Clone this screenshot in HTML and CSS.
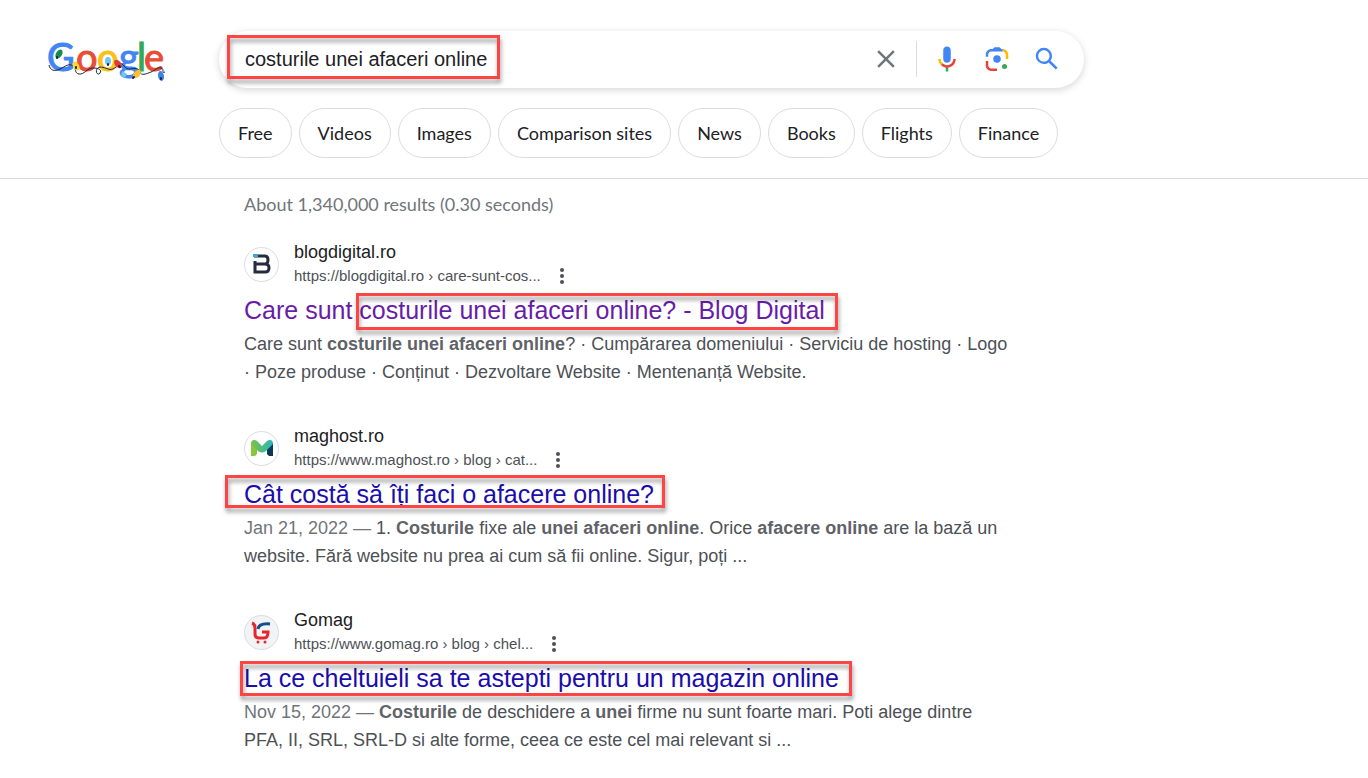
FILE: index.html
```html
<!DOCTYPE html>
<html lang="en">
<head>
    <meta charset="UTF-8">
    <meta name="viewport" content="width=device-width, initial-scale=1.0">
    <title>costurile unei afaceri online - Google Search</title>
    <link rel="stylesheet" href="styles.css">
</head>
<body>
    <header class="header">
        <div class="top">
            <a class="logo" href="#" aria-label="Google">
                <svg width="126" height="57" viewBox="0 0 126 57">
                    <g class="logo-text">
                        <text x="1" y="40" fill="#4285f4" stroke="#4285f4">G</text>
                        <text x="30" y="40" fill="#ea4c35" stroke="#ea4c35">o</text>
                        <text x="51" y="40" fill="#fbc116" stroke="#fbc116">o</text>
                        <text x="73" y="40" fill="#4285f4" stroke="#4285f4">g</text>
                        <text x="91" y="40" fill="#34a853" stroke="#34a853">l</text>
                        <text x="98" y="40" fill="#ea4c35" stroke="#ea4c35">e</text>
                    </g>
                    <!-- string of lights -->
                    <path d="M3 34c1 5 5 7 11 4s9-6 13-3 1 7 6 8 8-6 14-6 9 2 7 5-5-1-3-4 6-2 11 0 9-3 12-5 5 6 10 5 9-1 10 3 6 2 11 0 6-5 10-4 0 6 4 4" fill="none" stroke="#18283a" stroke-width="1"/>
                    <path d="M76 40l5 3-2 4-4-2z" fill="#6cc8ed"/>
                    <ellipse cx="13" cy="23" rx="3" ry="5" fill="#178a4c" transform="rotate(30 13 23)"/>
                    <ellipse cx="30" cy="35" rx="3" ry="5" fill="#fdd835" transform="rotate(-30 30 35)"/>
                    <ellipse cx="62" cy="30" rx="3" ry="4" fill="#6cc8ed"/>
                    <ellipse cx="72" cy="33" rx="3" ry="5" fill="#e23a3a" transform="rotate(-40 72 33)"/>
                    <ellipse cx="91" cy="43" rx="3" ry="5" fill="#fbc02d" transform="rotate(40 91 43)"/>
                    <ellipse cx="115" cy="45" rx="3" ry="5" fill="#3f83e8" transform="rotate(-10 115 45)"/>
                    <path d="M11 26v1M30 36v1M62 33v1M73 35l1 1M88 46l-1 1M115 47v1" stroke="#18283a" stroke-width="2" stroke-linecap="round"/>
                </svg>
            </a>
            <form class="search" action="#">
                <div class="query">
                    <input type="text" name="q" aria-label="Search" value="costurile unei afaceri online">
                    <span class="mark mark-query"></span>
                </div>
                <button class="clear" type="reset" aria-label="Clear">
                    <svg width="30" height="30" viewBox="0 0 24 24"><path d="M19 6.41L17.59 5 12 10.59 6.41 5 5 6.41 10.59 12 5 17.59 6.41 19 12 13.41 17.59 19 19 17.59 13.41 12z" fill="#70757a"/></svg>
                </button>
                <button class="tool" type="button" aria-label="Search by voice">
                    <svg width="30" height="30" viewBox="0 0 24 24">
                        <path d="M12 15c1.66 0 3-1.31 3-2.97V5c0-1.66-1.34-3-3-3S9 3.340 9 5v7.030c0 1.660 1.340 2.970 3 2.970z" fill="#4285f4"/>
                        <path d="M11 18.080h2V22h-2z" fill="#34a853"/>
                        <path d="M7.050 16.870C5.780 15.590 5 13.850 5 12h2c0 1.380.560 2.560 1.470 3.450l-1.420 1.420z" fill="#fbbc04"/>
                        <path d="M12 16.930c-1.380 0-2.610-.560-3.520-1.470l-1.420 1.410C8.320 18.150 10.050 19 12 19c3.870 0 7-3.060 7-7h-2c0 2.770-2.240 4.930-5 4.930z" fill="#ea4335"/>
                    </svg>
                </button>
                <button class="tool" type="button" aria-label="Search by image">
                    <svg width="30" height="30" viewBox="0 0 192 192">
                        <circle cx="144" cy="144" r="16" fill="#34a853"/>
                        <circle cx="96" cy="96" r="24" fill="#4285f4"/>
                        <path d="M24 109.500V136c0 19.900 16.100 36 36 36h36v-16H60c-11 0-20-9-20-20v-26.500z" fill="#ea4335"/>
                        <path d="M168 96V68c0-19.900-16.100-36-36-36v16c11 0 20 9 20 20v28z" fill="#fbbc04"/>
                        <path d="M112 20H80L68 32h-8c-19.900 0-36 16.100-36 36v14h16V68c0-11 9-20 20-20h72V32h-8z" fill="#4285f4"/>
                    </svg>
                </button>
                <button class="tool" type="submit" aria-label="Google Search">
                    <svg width="30" height="30" viewBox="0 0 24 24"><path d="M20.490 19l-5.730-5.730C15.530 12.200 16 10.910 16 9.500A6.500 6.500 0 1 0 9.500 16c1.410 0 2.700-.470 3.770-1.240L19 20.490 20.490 19zM5 9.500C5 7.010 7.010 5 9.500 5S14 7.010 14 9.500 11.990 14 9.500 14 5 11.990 5 9.500z" fill="#4285f4"/></svg>
                </button>
            </form>
        </div>
        <nav class="chips">
            <a href="#">Free</a>
            <a href="#">Videos</a>
            <a href="#">Images</a>
            <a href="#">Comparison sites</a>
            <a href="#">News</a>
            <a href="#">Books</a>
            <a href="#">Flights</a>
            <a href="#">Finance</a>
        </nav>
    </header>

    <main class="results">
        <p class="stats">About 1,340,000 results (0.30 seconds)</p>

        <article class="result">
            <div class="source">
                <span class="favicon">
                    <svg width="24" height="24" viewBox="0 0 24 24">
                        <path d="M4 4h11q3 0 3 4t-3 4H5M5 9v11h10q4 0 4-4t-4-4" fill="none" stroke="#272b3c" stroke-width="3"/>
                        <path d="M3 2h5v3H3z" fill="#38a3dc"/>
                    </svg>
                </span>
                <div>
                    <div class="site">blogdigital.ro</div>
                    <div class="url">
                        <cite>https://blogdigital.ro › care-sunt-cos...</cite>
                        <button type="button" aria-label="About this result">
                            <svg width="6" height="18" viewBox="0 0 6 18" fill="#4d5156"><circle cx="3" cy="3" r="2"/><circle cx="3" cy="9" r="2"/><circle cx="3" cy="15" r="2"/></svg>
                        </button>
                    </div>
                </div>
            </div>
            <h3><a class="visited" href="#">Care sunt <span class="marked">costurile unei afaceri online? - Blog Digital<span class="mark mark-first"></span></span></a></h3>
            <p>Care sunt <b>costurile unei afaceri online</b>? · Cumpărarea domeniului · Serviciu de hosting · Logo · Poze produse · Conținut · Dezvoltare Website · Mentenanță Website.</p>
        </article>

        <article class="result">
            <div class="source">
                <span class="favicon">
                    <svg width="24" height="24" viewBox="0 0 24 24">
                        <defs>
                            <linearGradient id="ribbon"><stop offset="0" stop-color="#7dc243"/><stop offset="1" stop-color="#26b6bd"/></linearGradient>
                        </defs>
                        <path d="M1 7l6 5v6l-2 2H1z" fill="#8bc53f"/>
                        <path d="M23 7l-6 5v6l2 2h4z" fill="#0f3557"/>
                        <path d="M1 8q0-4 3-4 2 0 3 1l5 5 5-5q1-1 3-1 3 0 3 4l-7 7q-4 3-8 0z" fill="url(#ribbon)"/>
                    </svg>
                </span>
                <div>
                    <div class="site">maghost.ro</div>
                    <div class="url">
                        <cite>https://www.maghost.ro › blog › cat...</cite>
                        <button type="button" aria-label="About this result">
                            <svg width="6" height="18" viewBox="0 0 6 18" fill="#4d5156"><circle cx="3" cy="3" r="2"/><circle cx="3" cy="9" r="2"/><circle cx="3" cy="15" r="2"/></svg>
                        </button>
                    </div>
                </div>
            </div>
            <h3><a class="marked" href="#">Cât costă să îți faci o afacere online?<span class="mark mark-second"></span></a></h3>
            <p><span class="date">Jan 21, 2022 — </span>1. <b>Costurile</b> fixe ale <b>unei afaceri online</b>. Orice <b>afacere online</b> are la bază un website. Fără website nu prea ai cum să fii online. Sigur, poți ...</p>
        </article>

        <article class="result">
            <div class="source">
                <span class="favicon tinted">
                    <svg width="24" height="24" viewBox="0 0 24 24" fill="none" stroke-width="3">
                        <path d="M8 9q1-6 12-5" stroke="#194b8f"/>
                        <path d="M2 3q3 1 3 5v6q0 4 4 4h5q4 0 4-6h-6" stroke="#e5252a"/>
                        <circle cx="8" cy="22" r="1.500" fill="#e5252a"/>
                        <circle cx="15" cy="22" r="1.500" fill="#e5252a"/>
                    </svg>
                </span>
                <div>
                    <div class="site">Gomag</div>
                    <div class="url">
                        <cite>https://www.gomag.ro › blog › chel...</cite>
                        <button type="button" aria-label="About this result">
                            <svg width="6" height="18" viewBox="0 0 6 18" fill="#4d5156"><circle cx="3" cy="3" r="2"/><circle cx="3" cy="9" r="2"/><circle cx="3" cy="15" r="2"/></svg>
                        </button>
                    </div>
                </div>
            </div>
            <h3><a class="marked" href="#">La ce cheltuieli sa te astepti pentru un magazin online<span class="mark mark-third"></span></a></h3>
            <p><span class="date">Nov 15, 2022 — </span><b>Costurile</b> de deschidere a <b>unei</b> firme nu sunt foarte mari. Poti alege dintre PFA, II, SRL, SRL-D si alte forme, ceea ce este cel mai relevant si ...</p>
        </article>
    </main>
</body>
</html>
```
FILE: styles.css
```css
* {
    box-sizing: border-box;
}

body {
    margin: 0;
    background: #fff;
    color: #202124;
    font-family: "Liberation Sans", Arial, sans-serif;
}

a {
    text-decoration: none;
}

button {
    display: flex;
    padding: 0;
    border: 0;
    background: none;
    cursor: pointer;
}

svg {
    display: block;
}

/* header */
.header {
    padding: 31px 0 20px;
    border-bottom: 1px solid #dadce0;
}

.top {
    display: flex;
    align-items: center;
}

.logo {
    width: 219px;
    padding-left: 46px;
}

.logo-text {
    font: 38px Lato, sans-serif;
    stroke-width: 1px;
}

.search {
    display: flex;
    align-items: center;
    gap: 10px;
    width: 865px;
    height: 57px;
    padding: 0 17px 2px 0;
    border-radius: 29px;
    box-shadow: 0 2px 6px 1px rgba(32, 33, 36, 0.15);
}

.query {
    position: relative;
    flex: 1;
}

.query input {
    display: block;
    width: 100%;
    padding: 0 0 0 26px;
    border: 0;
    outline: none;
    background: none;
    color: #202124;
    font: 20px/36px "Liberation Sans", Arial, sans-serif;
}

.clear {
    padding-right: 15px;
    border-right: 1px solid #dadce0;
    height: 36px;
    align-items: center;
}

.tool {
    padding: 0 5px;
}

.chips {
    display: flex;
    gap: 7px;
    padding: 20px 0 0 219px;
}

.chips a {
    padding: 0 18px;
    border: 1px solid #dadce0;
    border-radius: 25px;
    color: #202124;
    font: 18px/48px Lato, sans-serif;
    white-space: nowrap;
}

/* results */
.results {
    max-width: 1010px;
    padding-left: 244px;
}

.stats {
    margin: 13px 0 24px;
    color: #70757a;
    font: 18px/24px Lato, sans-serif;
}

.result {
    margin-bottom: 38px;
}

.source {
    display: flex;
    align-items: center;
    gap: 15px;
}

.favicon {
    display: flex;
    align-items: center;
    justify-content: center;
    width: 35px;
    height: 35px;
    border: 1px solid #dadce0;
    border-radius: 50%;
}

.tinted {
    background: #f1f3f4;
}

.site {
    font-size: 18px;
    line-height: 24px;
}

.url {
    display: flex;
    align-items: center;
    gap: 18px;
    color: #4d5156;
    font-size: 15px;
    line-height: 24px;
}

.url cite {
    font-style: normal;
}

h3 {
    margin: 5px 0 3px;
    font-size: 25px;
    font-weight: normal;
    line-height: 34px;
}

h3 a {
    color: #1a0dab;
}

.visited {
    color: #681da8;
}

.result p {
    margin: 0;
    color: #4d5156;
    font-size: 18px;
    line-height: 28px;
}

.result b {
    color: #5f6368;
}

.result .date {
    color: #70757a;
}

/* red frames round the matching phrases */
.marked {
    position: relative;
}

.mark {
    position: absolute;
    border: 3px solid #ff4444;
    filter: drop-shadow(1px 4px 2px rgba(0, 0, 0, 0.4));
    pointer-events: none;
}

.mark-query {
    top: -6px;
    left: 8px;
    width: 273px;
    height: 44px;
}

.mark-first {
    inset: -3px -13px -6px -3px;
}

.mark-second {
    inset: -5px -11px 0 -19px;
}

.mark-third {
    inset: -3px -13px -4px -4px;
}
```
